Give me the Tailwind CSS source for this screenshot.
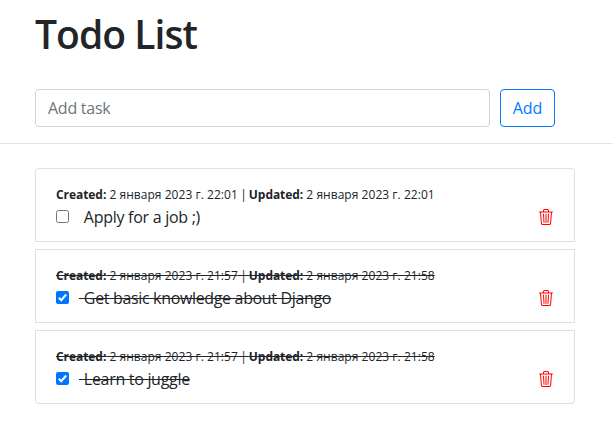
<!DOCTYPE html>
<html lang="en">
<head>
<meta charset="utf-8">
<title>Todo List</title>
<script src="https://cdn.jsdelivr.net/npm/@tailwindcss/browser@4"></script>
</head>
<body class="bg-white text-[#212529] font-['Open_Sans','Noto_Sans',sans-serif] text-base overflow-hidden">
<svg class="hidden"><symbol id="trash" viewBox="0 0 16 16"><path d="M6.5 1h3a.5.5 0 0 1 .5.5v1H6v-1a.5.5 0 0 1 .5-.5M11 2.5v-1A1.5 1.5 0 0 0 9.5 0h-3A1.5 1.5 0 0 0 5 1.5v1H1.5a.5.5 0 0 0 0 1h.538l.853 10.66A2 2 0 0 0 4.885 16h6.23a2 2 0 0 0 1.994-1.84l.853-10.66h.538a.5.5 0 0 0 0-1zm1.958 1-.846 10.58a1 1 0 0 1-.997.92h-6.23a1 1 0 0 1-.997-.92L3.042 3.5zm-7.487 1a.5.5 0 0 1 .528.47l.5 8.5a.5.5 0 0 1-.998.06L5 5.03a.5.5 0 0 1 .47-.53m5.058 0a.5.5 0 0 1 .47.53l-.5 8.5a.5.5 0 1 1-.998-.06l.5-8.5a.5.5 0 0 1 .528-.47M8 4.5a.5.5 0 0 1 .5.5v8.5a.5.5 0 0 1-1 0V5a.5.5 0 0 1 .5-.5"/></symbol></svg>
<header class="h-36 border-b border-[#e5e5e5] pl-[35px] pt-[10px]">
  <h1 class="h-12 text-[39px] leading-[48px] font-semibold tracking-[-0.95px]">Todo List</h1>
  <form class="mt-[31px] flex gap-2.5">
    <input type="text" placeholder="Add task" class="h-[38px] w-[455px] rounded border border-[#ced4da] px-3 tracking-[-0.25px] placeholder:text-[#6c757d]">
    <button type="button" class="h-[38px] w-[55px] rounded border border-[#007bff] text-[#007bff]">Add</button>
  </form>
</header>
<main class="ml-[35px] mt-6 flex w-[540px] flex-col gap-[7px]">
  <article class="flex h-[74px] justify-between rounded-t border border-[#dfdfdf] px-5">
    <div class="pt-[17px]">
      <p class="h-[18px] text-xs leading-[18px] tracking-[0.04px] whitespace-pre"><b class="tracking-[-0.06px]">Created:</b> 2 января 2023 г. 22:01<span class="tracking-[-0.6px]"> | </span><b class="tracking-[-0.06px]">Updated:</b> 2 января 2023 г. 22:01</p>
      <div class="flex h-6 items-center mt-px"><span class="size-[13px] -mt-0.5 rounded-[2.5px] border border-[#767676]"></span><span class="ml-[10px] whitespace-pre tracking-[-0.28px]"><span class="tracking-[0.7px]"> </span>Apply for a job ;)</span></div>
    </div>
    <svg class="mt-10 size-4 fill-[#ff0000]"><use href="#trash"/></svg>
  </article>
  <article class="flex h-[74px] justify-between border border-[#dfdfdf] px-5">
    <div class="pt-[17px]">
      <p class="h-[18px] text-xs leading-[18px] tracking-[0.04px] whitespace-pre line-through"><b class="tracking-[-0.06px]">Created:</b> 2 января 2023 г. 21:57<span class="tracking-[-0.6px]"> | </span><b class="tracking-[-0.06px]">Updated:</b> 2 января 2023 г. 21:58</p>
      <div class="flex h-6 items-center mt-px"><svg class="size-[13px] -mt-0.5" viewBox="0 0 13 13"><rect width="13" height="13" rx="2" fill="#0075ff"/><path d="M2.8 6.8 5.2 9.2 10.2 3.5" fill="none" stroke="#fff" stroke-width="2"/></svg><span class="ml-[10px] whitespace-pre tracking-[-0.34px] line-through"><span class="tracking-[0.7px]"> </span>Get basic knowledge about Django</span></div>
    </div>
    <svg class="mt-10 size-4 fill-[#ff0000]"><use href="#trash"/></svg>
  </article>
  <article class="flex h-[74px] justify-between rounded-b border border-[#dfdfdf] px-5">
    <div class="pt-[17px]">
      <p class="h-[18px] text-xs leading-[18px] tracking-[0.04px] whitespace-pre line-through"><b class="tracking-[-0.06px]">Created:</b> 2 января 2023 г. 21:57<span class="tracking-[-0.6px]"> | </span><b class="tracking-[-0.06px]">Updated:</b> 2 января 2023 г. 21:58</p>
      <div class="flex h-6 items-center mt-px"><svg class="size-[13px] -mt-0.5" viewBox="0 0 13 13"><rect width="13" height="13" rx="2" fill="#0075ff"/><path d="M2.8 6.8 5.2 9.2 10.2 3.5" fill="none" stroke="#fff" stroke-width="2"/></svg><span class="ml-[10px] whitespace-pre tracking-[-0.3px] line-through"><span class="tracking-[0.7px]"> </span>Learn to juggle</span></div>
    </div>
    <svg class="mt-10 size-4 fill-[#ff0000]"><use href="#trash"/></svg>
  </article>
</main>
</body>
</html>
